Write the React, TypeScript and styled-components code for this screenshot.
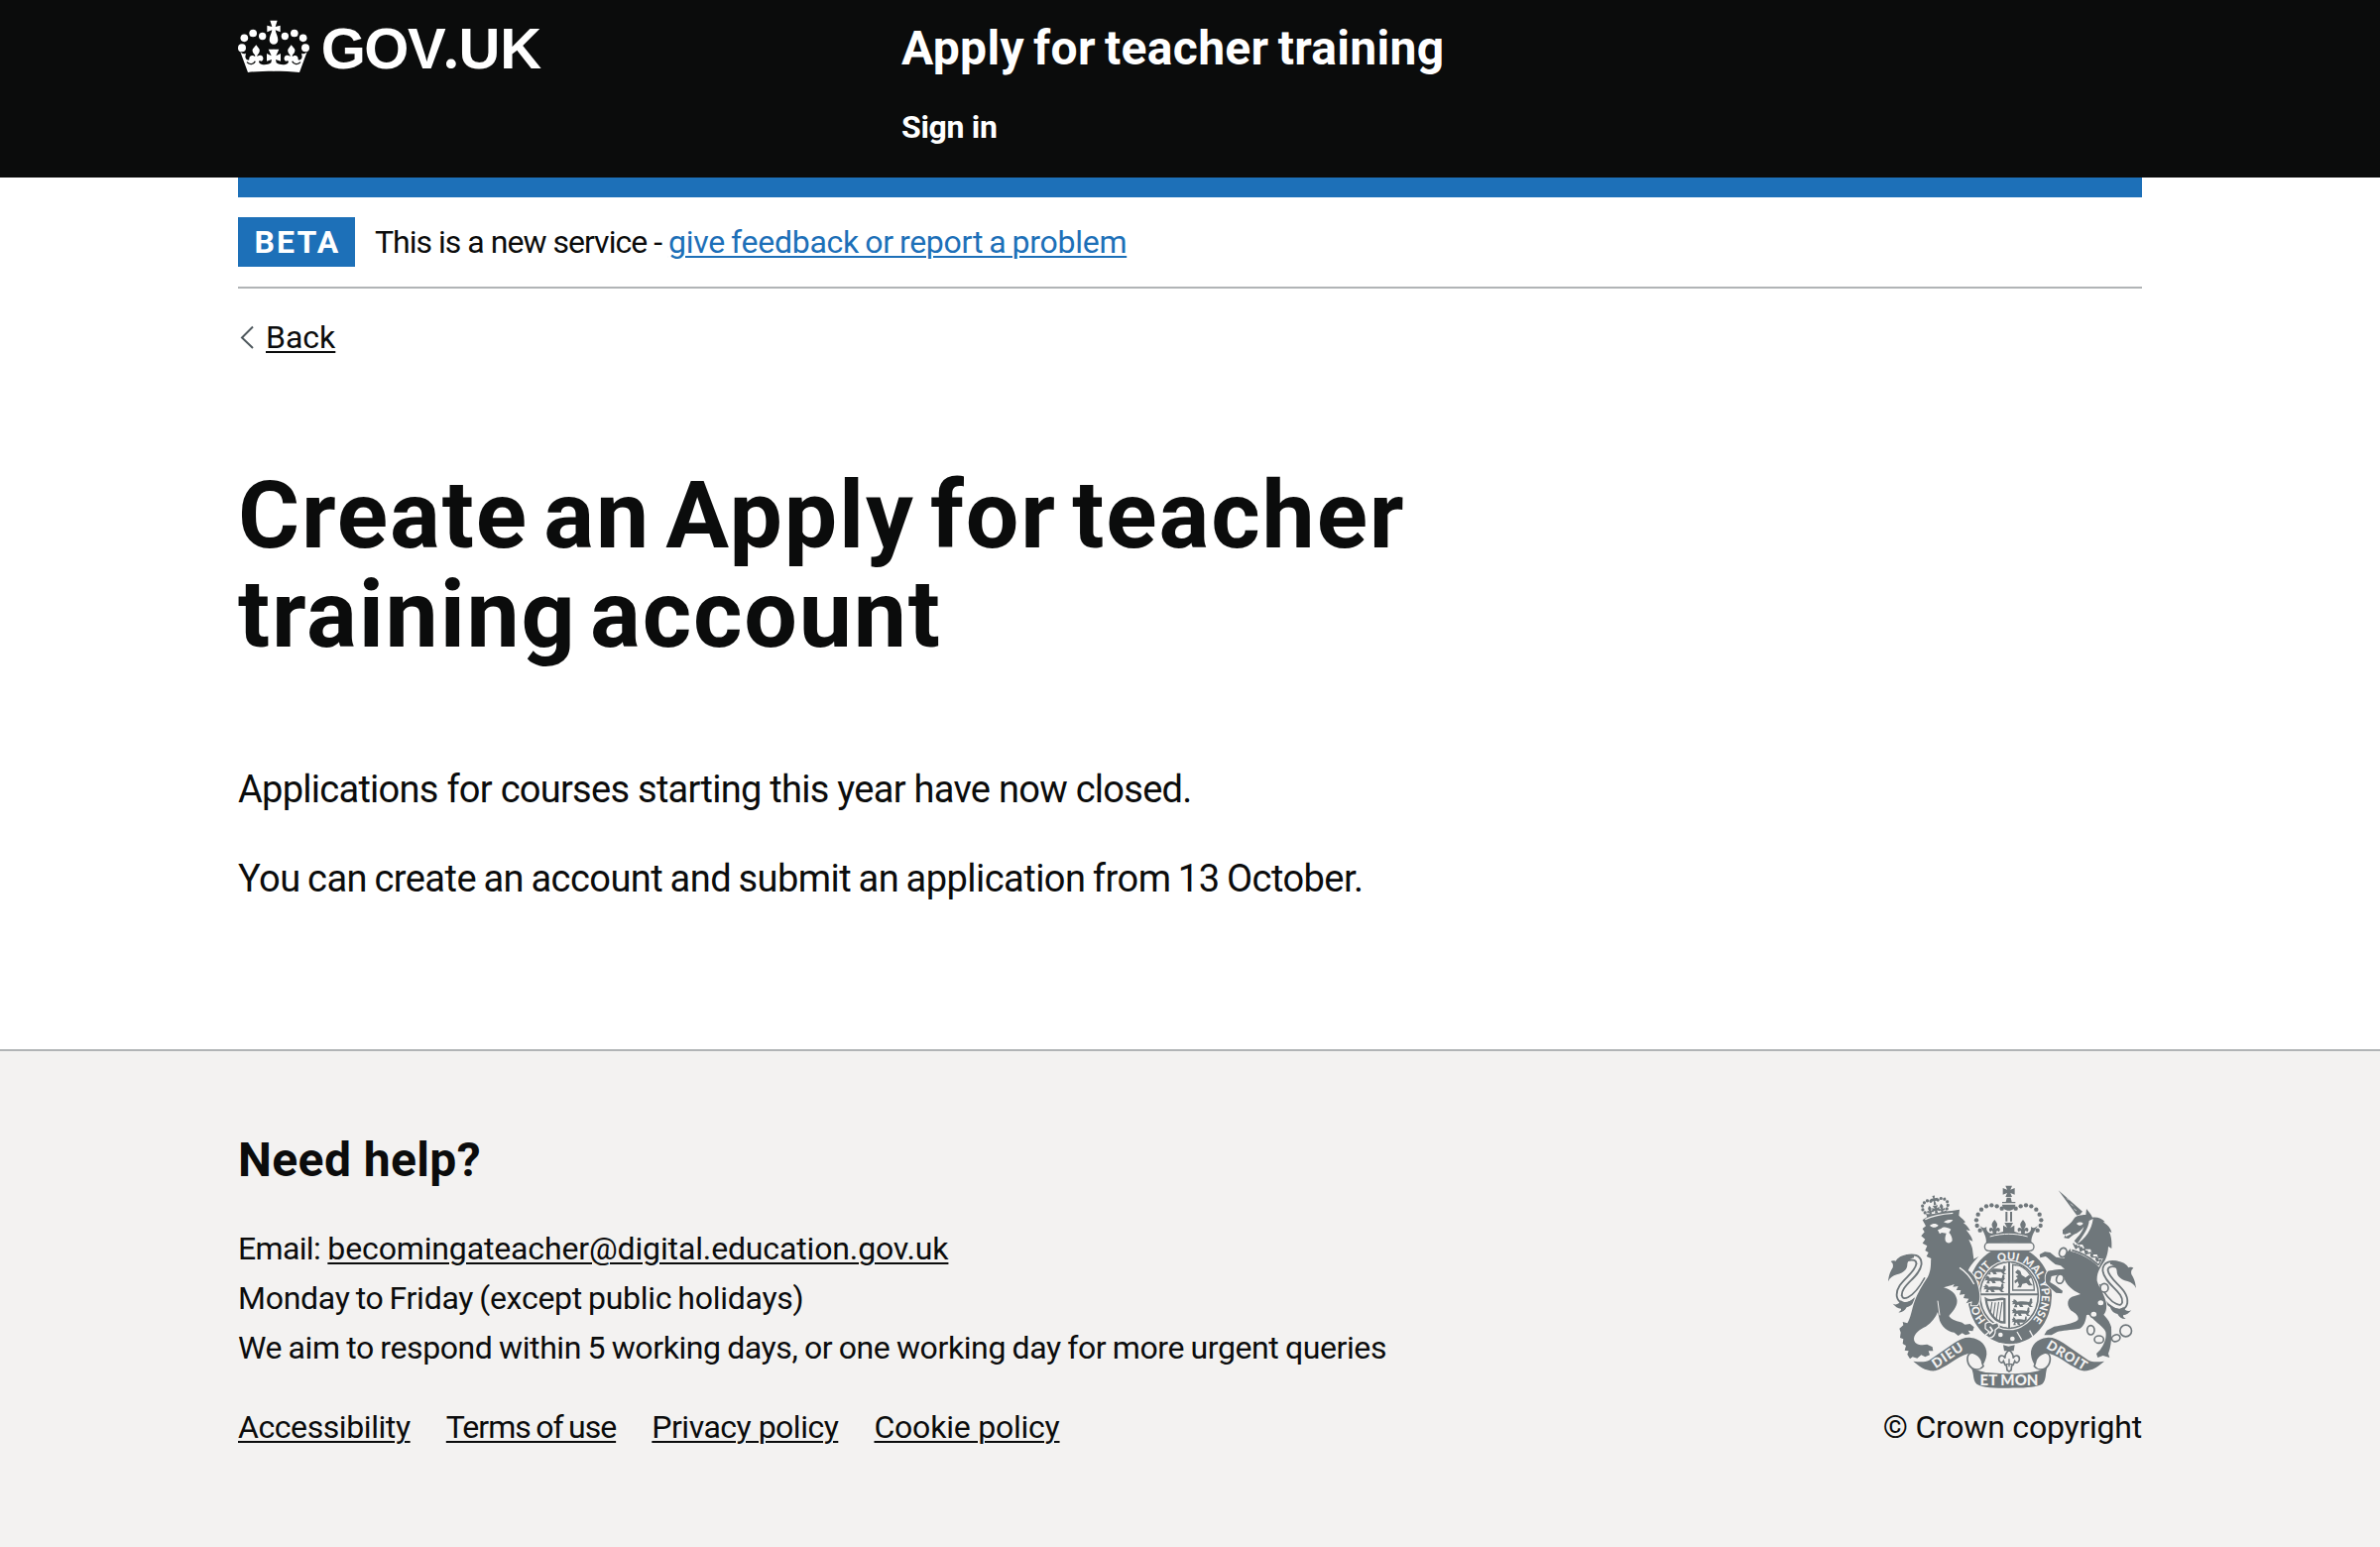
import React from "react";
import styled, { createGlobalStyle } from "styled-components";

const BLACK = "#0b0c0c";
const BLUE = "#1d70b8";
const GREY = "#b1b4b6";
const PALE = "#f3f2f1";
const CREST = "#6f777b";

const GlobalStyle = createGlobalStyle`
  *, *::before, *::after { box-sizing: border-box; }
  body {
    margin: 0;
    background: #fff;
    color: ${BLACK};
    font-family: Roboto, "Liberation Sans", sans-serif;
    font-size: 32px;
    line-height: 40px;
  }
  h1, h2, p, ul { margin: 0; padding: 0; }
`;

const Page = styled.div`
  display: flex;
  flex-direction: column;
  min-height: 1560px;
`;

const Container = styled.div`
  width: 1920px;
  margin: 0 auto;
`;

interface Spacing {
  $track?: number;
  $word?: number;
}

const Tracked = styled.span<Spacing>`
  letter-spacing: ${(p) => p.$track ?? 0}px;
  word-spacing: ${(p) => p.$word ?? 0}px;
  white-space: nowrap;
`;

const Header = styled.header`
  height: 179px;
  background: ${BLACK};
  color: #fff;
`;

const HeaderRow = styled(Container)`
  display: grid;
  grid-template-columns: 669px 1fr;
  padding-top: 2px;
`;

const LogoSvg = styled.svg`
  display: block;
  width: 310px;
  height: 84px;
`;

const HeaderContent = styled.div`
  display: flex;
  flex-direction: column;
  align-items: flex-start;
  gap: 34px;
  padding-top: 22px;
  font-weight: 700;
`;

const ServiceName = styled.a`
  font-size: 48px;
  line-height: 50px;
`;

const NavLink = styled.a`
  font-size: 32px;
  line-height: 40px;
`;

const BlueBar = styled(Container)`
  height: 20px;
  background: ${BLUE};
`;

const PhaseBanner = styled(Container)`
  display: flex;
  align-items: center;
  gap: 20px;
  height: 92px;
  border-bottom: 2px solid ${GREY};
`;

const PhaseTag = styled.strong`
  display: flex;
  align-items: center;
  justify-content: center;
  width: 118px;
  height: 50px;
  padding-left: 2px;
  background: ${BLUE};
  color: #fff;
  font-weight: 700;
  letter-spacing: 2.1px;
`;

const Link = styled.a<Spacing & { $color?: string }>`
  color: ${(p) => p.$color ?? BLACK};
  letter-spacing: ${(p) => p.$track ?? 0}px;
  word-spacing: ${(p) => p.$word ?? 0}px;
  white-space: nowrap;
  text-decoration: underline;
  text-decoration-thickness: 2px;
  text-underline-offset: 3px;
`;

const BackRow = styled(Container)`
  display: flex;
  align-items: center;
  padding-top: 29px;
`;

const Chevron = styled.svg`
  width: 16px;
  height: 24px;
  margin: 0 10px 0 2px;
`;

const Main = styled(Container).attrs({ as: "main" })`
  flex: 1 0 auto;
  padding-top: 110px;
`;

const Heading = styled.h1`
  display: flex;
  flex-direction: column;
  margin-bottom: 101px;
  font-size: 95px;
  line-height: 100px;
  font-weight: 700;
`;

const Lead = styled.p`
  margin-bottom: 40px;
  font-size: 38px;
  line-height: 50px;
`;

const Footer = styled.footer`
  height: 502px;
  border-top: 2px solid ${GREY};
  background: ${PALE};
`;

const FooterRow = styled(Container)`
  display: flex;
  justify-content: space-between;
  align-items: flex-end;
  padding-top: 85px;
`;

const HelpTitle = styled.h2`
  margin-bottom: 39px;
  font-size: 48px;
  line-height: 50px;
  font-weight: 700;
`;

const HelpLines = styled.div`
  display: flex;
  flex-direction: column;
  margin-bottom: 35px;
  line-height: 50px;
`;

const FooterLinks = styled.ul`
  display: flex;
  gap: 36.2px;
  list-style: none;
`;

const Copyright = styled.div`
  display: flex;
  flex-direction: column;
  align-items: flex-end;
  gap: 16px;
`;

const CrestSvg = styled.svg`
  display: block;
  width: 258px;
  height: 210px;
  margin-right: 2px;
`;

const crownHalf =
  "M169 215C140 215 112 216 90 219L67 157C72 162 78 165 84 161L82 172C84 180 88 183 94 181C93 173 97 168 103 168C107 168 110 170 112 171L111 166C104 160 102 152 105 148L115 136L124 148C127 153 125 160 119 166L118 171C124 166 132 166 135 172C139 180 133 188 127 184C122 184 122 188 126 192C133 197 148 198 160 190L162 180L147 185V162L161 169L152 149H169Z";

function Logo() {
  return (
    <LogoSvg viewBox="0 -18 310 84" aria-label="GOV.UK">
      <g transform="translate(-20 -20) scale(.33333)" fill="#fff">
        {[0, 1].map((side) => (
          <g key={side} transform={side ? "translate(336 0) scale(-1 1)" : undefined}>
            <circle cx="72" cy="145" r="12" />
            <circle cx="79" cy="115" r="11.5" />
            <circle cx="105.5" cy="100.5" r="11.5" />
            <circle cx="134" cy="109.5" r="11" />
            <path d={crownHalf} />
            <path d="M87 188C94 196 107 196 112 185" fill="none" stroke={BLACK} strokeWidth="4" />
          </g>
        ))}
        <path d="M157 62H179L173 81L188 77V97L173 91C175 103 181 110 181 121A13 13 0 0 1 155 121C155 110 161 103 163 91L148 97V77L163 81Z" />
      </g>
      <text y="49" fill="#fff" fontWeight="700" fontSize="58" fontFamily="Liberation Sans, sans-serif">
        <tspan x="83.8">G</tspan>
        <tspan x="127.3">O</tspan>
        <tspan x="171">V</tspan>
        <tspan x="207.2" fontFamily="Lato, sans-serif" fontSize="64">.</tspan>
        <tspan x="222.6">U</tspan>
        <tspan x="264.2">K</tspan>
      </text>
    </LogoSvg>
  );
}

const pearls: [number, number][] = [
  [416, 117], [401, 110], [385, 107], [369, 110], [354, 120], [344, 135], [339, 152], [341, 169], [350, 183],
];

const lionPearls: [number, number][] = [
  [181, 124], [176, 114], [177, 103], [184, 94], [194, 90], [204, 93],
  [226, 93], [236, 90], [246, 94], [253, 103], [253, 114], [248, 124],
];

const collarPearls: [number, number][] = [[640, 231], [656, 238], [672, 248], [688, 258], [704, 270]];

const gartWords: [string, number][] = [
  ["HO", 16.4], ["SOIT", 35], ["QUI", 49.4], ["MAL", 61.6], ["Y", 70], ["PENSE", 79.6],
];

const passant =
  "M0 8L6 4L5 0L12 3L16 8C28 6 40 6 50 9C54 4 50 0 56 -2C62 0 56 6 60 10C58 14 54 16 56 20L62 24H52L46 17H30L34 24H24L20 17L14 18L16 25H6L10 15L0 16L5 11Z";

function Tail() {
  return (
    <g>
      <path d="M190 330C150 402 112 408 106 382C101 344 160 322 165 285C166 264 146 262 128 267" fill="none" stroke={CREST} strokeWidth="21" />
      <path d="M192 326C150 402 112 408 106 382C101 344 160 322 165 285C166 264 146 262 122 267" fill="none" stroke={PALE} strokeWidth="10" />
      <path d="M150 258C122 250 99 266 95 276C88 274 84 274 80 277C86 282 88 286 86 296C80 306 74 316 72 338C78 326 86 320 98 317C122 311 130 300 130 287C130 277 138 268 150 266Z" fill={CREST} />
      <path d="M86 405C97 411 107 404 110 394C122 406 140 399 152 386C150 405 142 412 128 416C122 427 114 432 103 431C109 428 112 424 111 420C101 419 93 413 86 405Z" fill={CREST} />
    </g>
  );
}

function Fleur({ x, y, s = 1 }: { x: number; y: number; s?: number }) {
  return (
    <path
      transform={`translate(${x} ${y}) scale(${s})`}
      d="M0 -24C5 -17 10 -13 8 -6C7 -2 4 1 4 5C9 -3 18 0 16 8C15 13 10 13 9 9C5 10 5 15 6 20H-6C-5 15 -5 10 -9 9C-10 13 -15 13 -16 8C-18 0 -9 -3 -4 5C-4 1 -7 -2 -8 -6C-10 -13 -5 -17 0 -24Z"
    />
  );
}

function Crest() {
  return (
    <CrestSvg viewBox="60 40 774 630" fill={CREST} aria-hidden="true">
      <defs>
        <path id="garter" d="M439 487A98 107 0 0 1 439 273A98 107 0 0 1 439 487" />
        <clipPath id="shield">
          <ellipse cx="438" cy="379" rx="85" ry="98" />
        </clipPath>
      </defs>

      {/* tails sit behind the supporters */}
      <Tail />
      <g transform="translate(894 20) scale(-1 1)">
        <Tail />
      </g>

      {/* imperial crown */}
      <path d="M427 48H447L442 60L455 55V75L442 70L447 82H427L432 70L419 75V55L432 60Z" />
      <path d="M431 84H443L446 97H457V101H417V97H428Z" />
      <path d="M417 105H457C456 116 449 123 437 123S418 116 417 105Z" />
      {[0, 1].map((side) => (
        <g key={side} transform={side ? "translate(874 0) scale(-1 1)" : undefined}>
          {pearls.map(([x, y]) => (
            <circle key={x + "-" + y} cx={x} cy={y} r="6.5" />
          ))}
          <Fleur x={394} y={175} />
          <path d="M349 168C356 176 364 178 370 172C368 184 374 192 386 192C402 194 418 188 426 184L420 188V168L432 175L424 160H438V220C412 218 388 222 368 224C372 205 360 186 349 168Z" />
          <path d="M380 202C400 196 420 194 438 194" fill="none" stroke={PALE} strokeWidth="3" />
        </g>
      ))}
      <path d="M430 127V156M444 127V156" stroke={CREST} strokeWidth="6" />

      {/* garter and shield */}
      <ellipse cx="440" cy="379" rx="127" ry="148" />
      <rect x="364" y="220" width="149" height="25" rx="12" fill={PALE} stroke={CREST} strokeWidth="4" />
      <ellipse cx="438" cy="379" rx="94" ry="106" fill={PALE} />
      <ellipse cx="438" cy="379" rx="88" ry="100" fill={PALE} stroke={CREST} strokeWidth="5" />
      <g clipPath="url(#shield)">
        {[0, 1, 2].map((i) => (
          <g key={i}>
            <path d={passant} transform={`translate(${366 - i * 3} ${292 + i * 27}) scale(1.04 1)`} />
            <path d={passant} transform={`translate(446 ${391 + i * 27}) scale(${1.05 - i * 0.14} 1)`} />
          </g>
        ))}
        <path d="M449 287V364H514C514 330 498 302 470 290Z" fill="none" stroke={CREST} strokeWidth="4" />
        <path d="M456 310L464 302L472 306L476 318L488 326L498 318L506 324L498 332L503 342L510 350L498 350L490 342L478 345L474 356H462L468 348L464 338L456 344L454 336L464 328L458 322L466 318Z" />
        <path d="M368 391C384 402 410 386 424 391V462C396 462 372 430 368 391Z" fill="none" stroke={CREST} strokeWidth="7" />
        <path d="M383 402V436M393 402V448M403 399V456M413 398V460" stroke={CREST} strokeWidth="3.5" transform="rotate(8 400 425)" />
        <path d="M437 268V486M346 377H530" stroke={PALE} strokeWidth="13" />
      </g>
      <path d="M438 278V480M350 377H526" stroke={CREST} strokeWidth="6" />
      <g fill={PALE} fontFamily="Lato, sans-serif" fontWeight="900" fontSize="33" textAnchor="middle">
        {gartWords.map(([word, at]) => (
          <text key={word}>
            <textPath href="#garter" startOffset={at + "%"}>{word}</textPath>
          </text>
        ))}
      </g>
      <path d="M366 466C374 458 382 460 388 466L404 462L408 474L396 484C398 496 390 510 376 508L366 500L378 490L366 480Z" stroke={PALE} strokeWidth="4" />
      <path d="M380 474L388 486L378 497" fill="none" stroke={PALE} strokeWidth="5" />
      <circle cx="412" cy="499" r="7" fill={PALE} />
      <circle cx="448" cy="511" r="7" fill={PALE} />
      <path d="M462 490L476 514M500 486L512 508" stroke={PALE} strokeWidth="4" />

      {/* lion */}
      <path
        stroke={PALE}
        strokeWidth="6"
        paintOrder="stroke"
        d="M176 152C200 132 238 126 264 124L288 120L286 138C294 146 302 152 306 158L300 161C310 168 316 176 320 184L308 182C318 194 326 204 328 216L316 211C322 224 328 236 328 248L331 270L346 262C334 274 320 290 314 304C332 316 344 340 348 372C350 390 348 404 340 410L324 410L326 398L308 404L316 390L300 388L304 376L288 378L292 364L278 364L284 352L268 354L272 346C262 350 250 352 240 356C260 362 276 372 280 392C284 412 266 430 256 442C264 456 284 458 296 462L304 468L320 466L332 476L328 488L314 486L320 496L306 500L296 494L284 502L272 492C250 490 234 472 228 456L222 430C216 446 204 462 186 474C168 482 152 494 150 510C150 524 162 530 176 530L190 528L206 536L208 548L194 548L198 560L184 566L172 560L160 570L146 566L138 572L130 558L134 548L122 546L126 532L116 526L118 512L108 508L110 492L106 480L118 470L116 460L130 464C140 450 144 420 152 398C160 374 176 348 192 324C204 300 200 280 202 268L188 262L194 250L184 244L190 230L176 222L184 210L172 200L182 188L176 178L186 170Z"
      />
      <g fill={PALE}>
        <path d="M198 168C208 160 218 162 224 168C216 176 206 176 198 168Z" />
        <path d="M240 158C250 150 260 150 268 152C262 162 250 164 240 158Z" />
        <path d="M222 182L232 178C240 170 252 174 262 180L256 190C262 196 266 204 266 214C262 224 248 224 245 214C243 204 246 198 248 192L234 190L228 194Z" />
        <path d="M288 296C304 306 320 322 332 346" fill="none" stroke={PALE} strokeWidth="4" />
        <path d="M222 396L228 440" stroke={PALE} strokeWidth="3" />
      </g>
      <g transform="rotate(-10 214 112)">
        <path d="M183 128C200 134 226 134 246 128L244 142C224 147 204 147 186 142Z" />
        {lionPearls.map(([x, y]) => (
          <circle key={x + "-" + y} cx={x} cy={y} r="4.8" />
        ))}
        <path d="M211 78H219L217 86H226V94H217L219 106H211L213 94H204V86H213Z" />
        <Fleur x={197} y={120} s={0.6} />
        <Fleur x={233} y={120} s={0.6} />
        <path d="M207 108H223L218 117L226 114V126L218 123L220 132H210L212 123L204 126V114L212 117Z" />
      </g>
      <path d="M184 150C210 137 240 133 268 131" fill="none" stroke={PALE} strokeWidth="4" />

      {/* unicorn */}
      <path d="M587 62L660 126L646 142Z" />
      <path d="M612 86L618 92M624 102L632 110M634 118L642 124" stroke={PALE} strokeWidth="2" />
      <path
        stroke={PALE}
        strokeWidth="5"
        paintOrder="stroke"
        d="M600 182C612 170 626 162 634 148C640 138 656 136 670 136L672 118L686 136L690 144C706 142 720 148 728 158L722 158C738 168 746 178 748 190L740 186C750 204 748 226 748 238L738 232C738 246 734 262 728 274C716 292 702 310 704 336C710 356 728 378 732 404C734 424 728 434 724 438C738 452 744 464 747 476C748 504 748 532 738 556L742 568L722 562L706 568L702 556L714 544C724 530 734 510 730 490C722 472 700 462 690 448C684 440 676 436 672 440C670 458 664 474 652 480C626 484 596 486 584 490L566 500L544 500L552 486L574 474C600 470 632 466 646 454C650 442 640 434 626 426C612 412 612 392 628 384L654 376C628 364 610 348 604 326L584 318L566 322L562 340L578 350L600 366L598 374L580 372L566 360L550 344C546 328 548 314 556 306C572 302 594 300 606 300L594 290L578 286C566 278 556 266 548 262L532 266L530 256L546 248L562 250L580 264L604 268L612 250L630 232L636 214C648 200 660 188 664 172C652 190 640 192 630 198L618 208L604 206L608 196L600 194Z"
      />
      <g fill={PALE}>
        <path d="M642 162C650 156 658 158 662 162C656 170 648 170 642 162Z" />
        <path d="M606 196L622 190L626 194L610 202Z" />
        <path d="M692 148C688 182 668 208 644 224C664 196 678 176 680 154Z" />
        <path d="M624 220L636 216L646 226L660 226L668 240L684 240L690 256L704 256L708 268L722 268L710 294C684 268 652 252 624 246Z" />
      </g>
      <path d="M628 243C656 250 684 266 708 288" fill="none" stroke={CREST} strokeWidth="5" />
      <path d="M632 222L640 238L650 230L654 246L666 238L670 254L686 250L688 264L702 264L704 276L716 272L709 288" fill="none" stroke={CREST} strokeWidth="4" />
      {collarPearls.map(([x, y]) => (
        <circle key={x} cx={x} cy={y} r="5" />
      ))}
      <g fill={PALE} stroke={CREST} strokeWidth="5">
        <ellipse cx="601" cy="250" rx="11" ry="14" transform="rotate(20 601 250)" />
        <ellipse cx="592" cy="330" rx="11" ry="14" transform="rotate(15 592 330)" />
        <ellipse cx="726" cy="357" rx="12" ry="13" />
        <ellipse cx="715" cy="402" rx="11" ry="10" />
        <ellipse cx="694" cy="437" rx="11" ry="10" />
        <ellipse cx="685" cy="485" rx="11" ry="14" />
        <ellipse cx="710" cy="513" rx="14" ry="11" />
        <ellipse cx="761" cy="509" rx="13" ry="10" transform="rotate(-20 761 509)" />
        <circle cx="791" cy="487" r="17.5" />
      </g>

      {/* badge below the garter */}
      <path d="M420 530L436 534L455 530L452 548H423Z" />
      <path
        fill={PALE}
        stroke={CREST}
        strokeWidth="5"
        d="M438 544C446 552 452 560 450 570C456 558 470 560 469 574C468 584 458 586 455 579L450 590L446 592L444 606L438 610L432 606L430 592L426 590L421 579C418 586 408 584 407 574C406 560 420 558 426 570C424 560 430 552 438 544Z"
      />
      <path d="M438 572V596M428 588H448" stroke={CREST} strokeWidth="4" />

      {/* motto ribbon */}
      {[0, 1].map((side) => (
        <g key={side} transform={side ? "translate(874 0) scale(-1 1)" : undefined}>
          <path
            fill={PALE}
            stroke={CREST}
            strokeWidth="5"
            strokeLinejoin="round"
            d="M318 556C308 566 310 588 326 600C338 606 352 604 360 594C352 576 356 560 362 556L352 544Z"
          />
          <path d="M148 579C170 582 184 582 196 576L272 524C290 512 306 506 322 508C350 510 372 532 370 558C368 574 364 582 358 590C352 568 336 552 314 556C280 564 246 600 214 608C186 610 166 594 148 579Z" />
        </g>
      ))}
      <path d="M322 597C344 608 362 613 382 614C420 618 460 618 494 614C516 612 534 608 554 596C546 616 552 636 538 648C520 658 480 660 437 660S358 660 340 648C326 634 334 616 322 597Z" />
      <g fill={PALE} fontFamily="Lato, sans-serif" fontWeight="900">
        <text transform="translate(216 602) rotate(-34)" fontSize="40" letterSpacing="3">DIEU</text>
        <text transform="translate(548 538) rotate(31)" fontSize="40" letterSpacing="2.5">DROIT</text>
        <text x="438" y="651" fontSize="45" textAnchor="middle">ET MON</text>
      </g>
    </CrestSvg>
  );
}

export default function App() {
  return (
    <Page>
      <GlobalStyle />
      <Header>
        <HeaderRow>
          <Logo />
          <HeaderContent>
            <ServiceName><Tracked $track={0.3} $word={-3}>Apply for teacher training</Tracked></ServiceName>
            <NavLink><Tracked $track={-0.3}>Sign in</Tracked></NavLink>
          </HeaderContent>
        </HeaderRow>
      </Header>
      <BlueBar />
      <PhaseBanner>
        <PhaseTag>BETA</PhaseTag>
        <span>
          <Tracked $track={-0.98}>This is a new service - </Tracked>
          <Link $color={BLUE} $track={-0.27} $word={-1.5}>give feedback or report a problem</Link>
        </span>
      </PhaseBanner>
      <BackRow>
        <Chevron viewBox="0 0 16 24">
          <path d="M13 1.5L2 12.5L13 23" fill="none" stroke="#505a5f" strokeWidth="2" />
        </Chevron>
        <Link>Back</Link>
      </BackRow>
      <Main>
        <Heading>
          <Tracked $track={1.9} $word={-10.4}>Create an Apply for teacher</Tracked>
          <Tracked $track={1.8} $word={-12}>training account</Tracked>
        </Heading>
        <Lead><Tracked $track={-0.73}>Applications for courses starting this year have now closed.</Tracked></Lead>
        <Lead><Tracked $track={-0.53} $word={-1.5}>You can create an account and submit an application from 13 October.</Tracked></Lead>
      </Main>
      <Footer>
        <FooterRow>
          <div>
            <HelpTitle><Tracked $track={0.4}>Need help?</Tracked></HelpTitle>
            <HelpLines>
              <span>
                <Tracked $track={-0.65}>Email: </Tracked>
                <Link $track={-0.14}>becomingateacher@digital.education.gov.uk</Link>
              </span>
              <Tracked $track={-0.26} $word={-1.7}>Monday to Friday (except public holidays)</Tracked>
              <Tracked $track={-0.4} $word={-1}>We aim to respond within 5 working days, or one working day for more urgent queries</Tracked>
            </HelpLines>
            <FooterLinks>
              <li><Link $track={-0.42}>Accessibility</Link></li>
              <li><Link $track={-1} $word={-1.5}>Terms of use</Link></li>
              <li><Link $track={-0.5}>Privacy policy</Link></li>
              <li><Link $track={-0.22}>Cookie policy</Link></li>
            </FooterLinks>
          </div>
          <Copyright>
            <Crest />
            <Tracked $track={-0.22}>© Crown copyright</Tracked>
          </Copyright>
        </FooterRow>
      </Footer>
    </Page>
  );
}
